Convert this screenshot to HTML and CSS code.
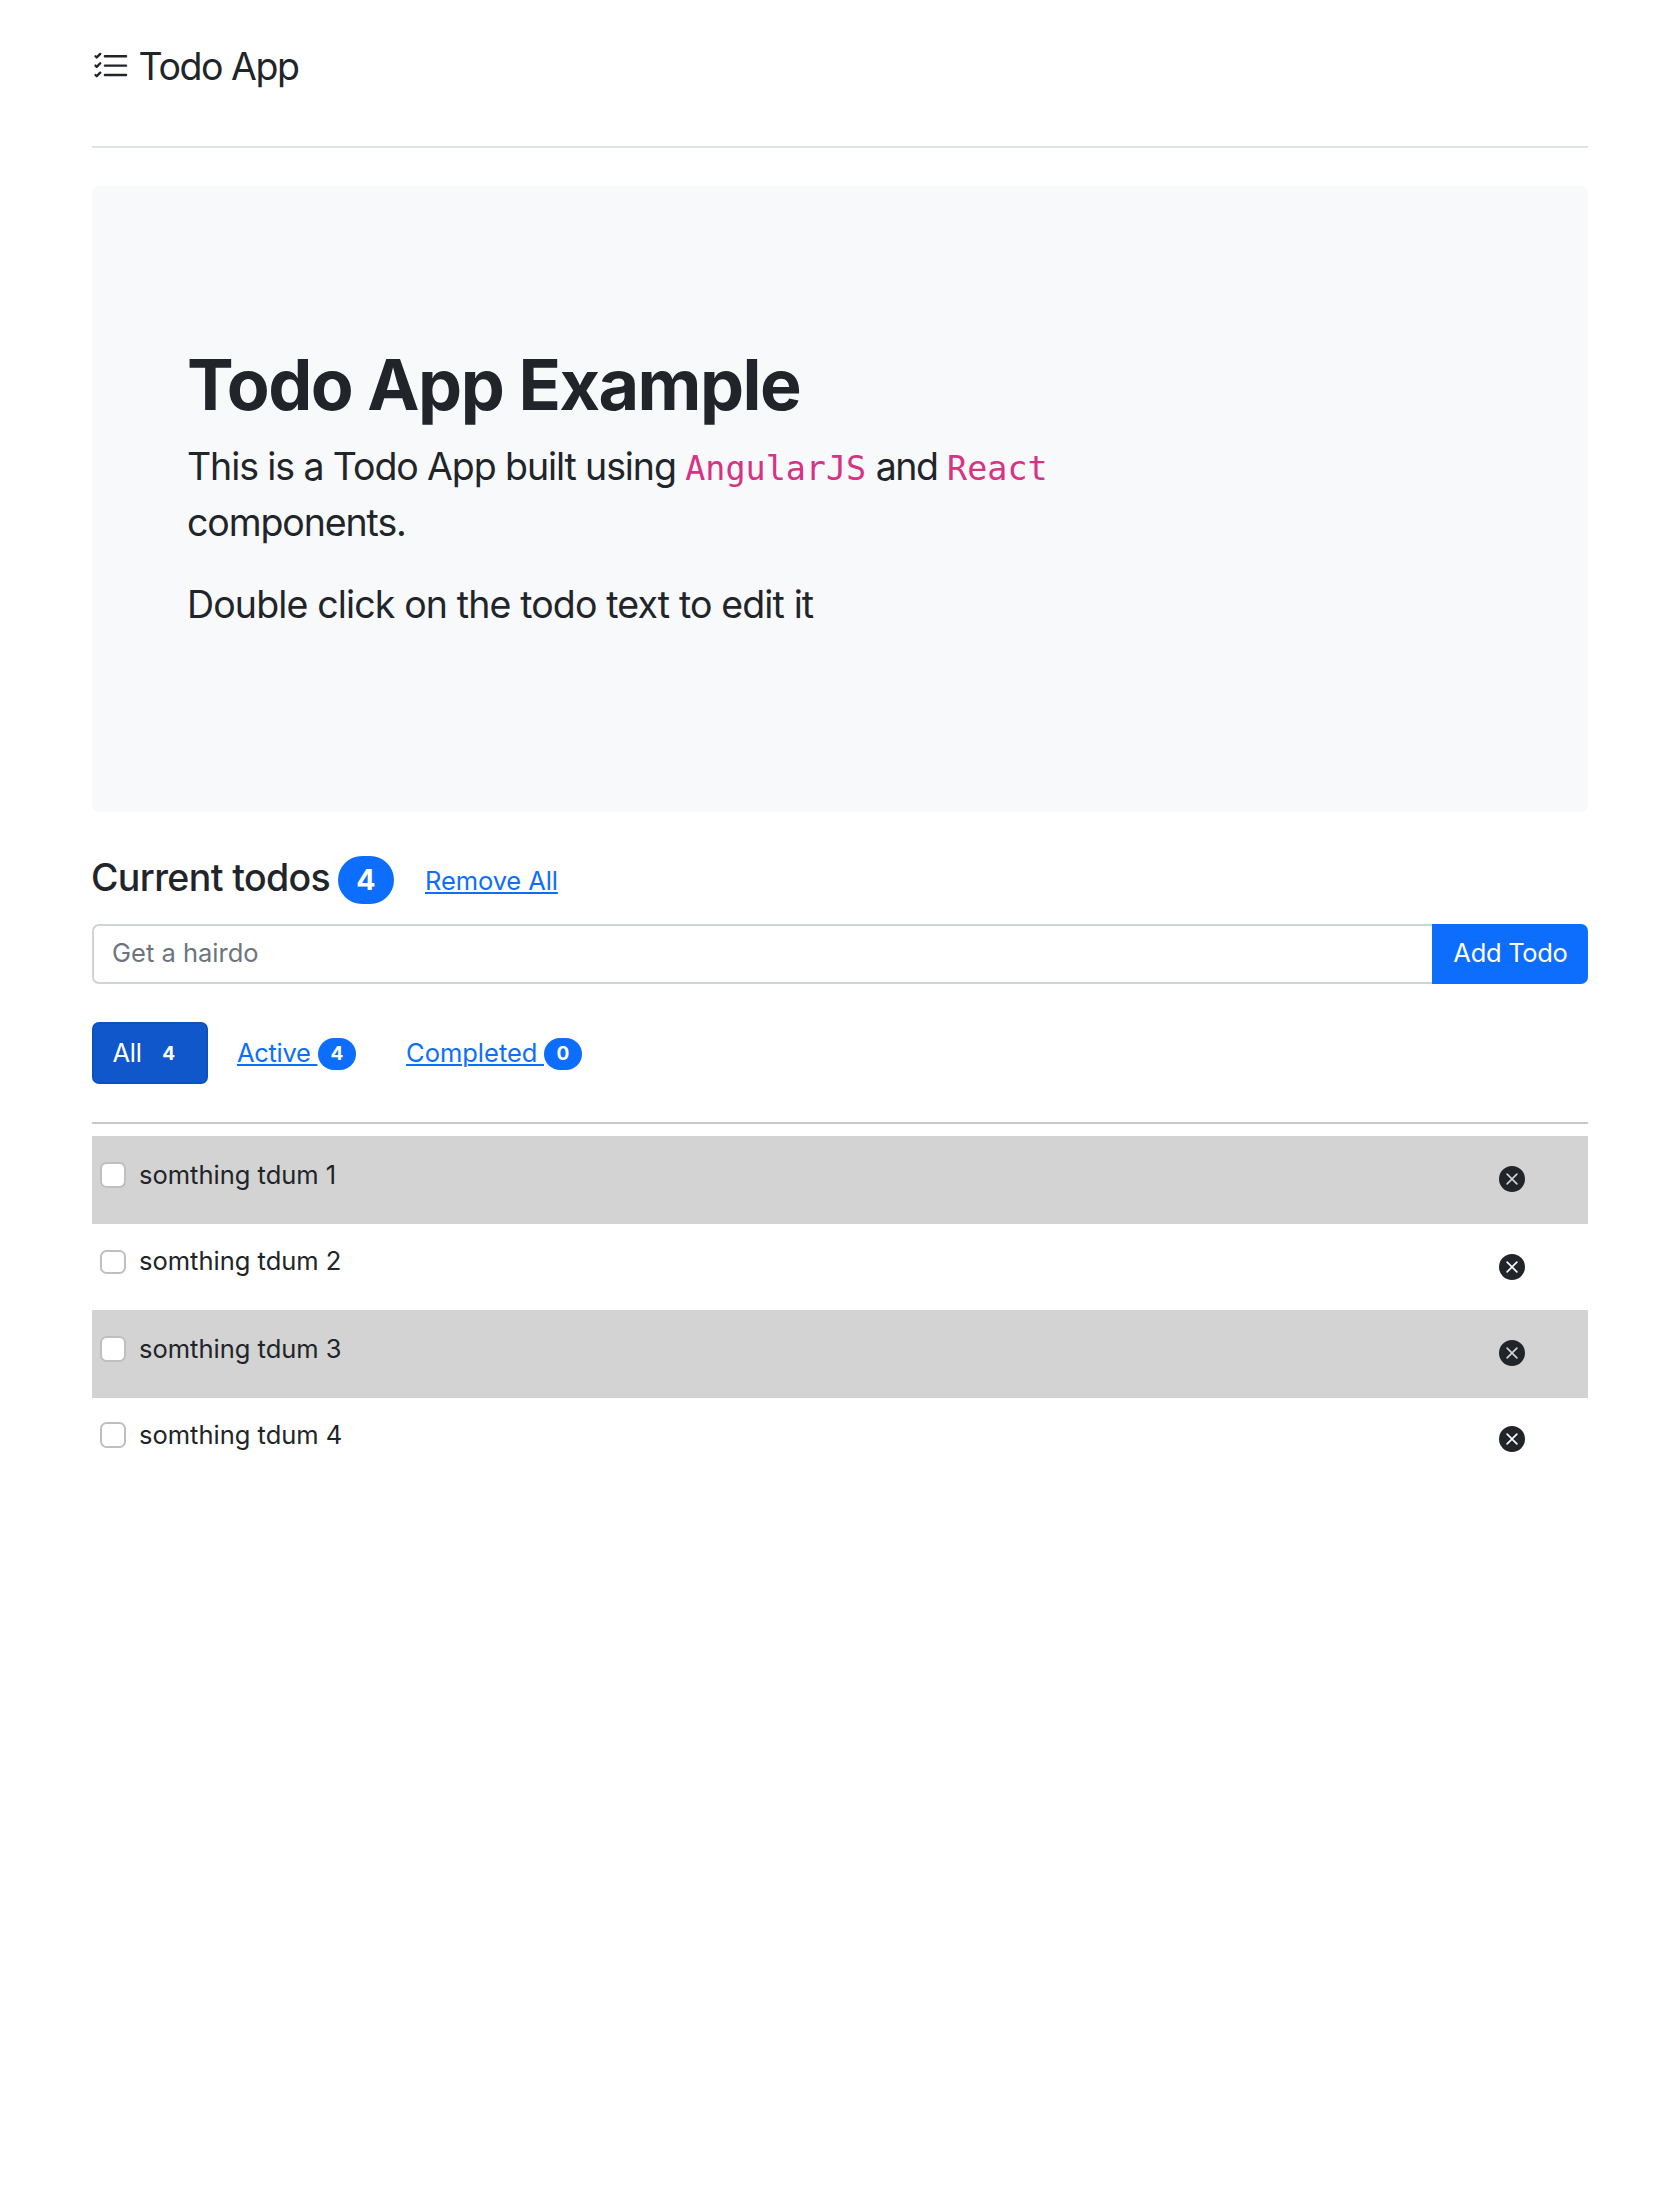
FILE: index.html
```html
<!DOCTYPE html>
<html lang="en">
<head>
<meta charset="utf-8">
<title>Todo App</title>
<link rel="stylesheet" href="styles.css">
</head>
<body>
<svg width="0" height="0" class="sprite" aria-hidden="true">
  <symbol id="list-check" viewBox="0 0 16 16"><path fill-rule="evenodd" d="M5 11.5a.5.5 0 0 1 .5-.5h9a.5.5 0 0 1 0 1h-9a.5.5 0 0 1-.5-.5zm0-4a.5.5 0 0 1 .5-.5h9a.5.5 0 0 1 0 1h-9a.5.5 0 0 1-.5-.5zm0-4a.5.5 0 0 1 .5-.5h9a.5.5 0 0 1 0 1h-9a.5.5 0 0 1-.5-.5zM3.854 2.146a.5.5 0 0 1 0 .708l-1.5 1.5a.5.5 0 0 1-.708 0l-.5-.5a.5.5 0 1 1 .708-.708L2 3.293l1.146-1.147a.5.5 0 0 1 .708 0zm0 4a.5.5 0 0 1 0 .708l-1.5 1.5a.5.5 0 0 1-.708 0l-.5-.5a.5.5 0 1 1 .708-.708L2 7.293l1.146-1.147a.5.5 0 0 1 .708 0zm0 4a.5.5 0 0 1 0 .708l-1.5 1.5a.5.5 0 0 1-.708 0l-.5-.5a.5.5 0 0 1 .708-.708l.146.147 1.146-1.147a.5.5 0 0 1 .708 0z"/></symbol>
  <symbol id="x-circle" viewBox="0 0 16 16"><path d="M16 8A8 8 0 1 1 0 8a8 8 0 0 1 16 0zM5.354 4.646a.5.5 0 1 0-.708.708L7.293 8l-2.647 2.646a.5.5 0 0 0 .708.708L8 8.707l2.646 2.647a.5.5 0 0 0 .708-.708L8.707 8l2.647-2.646a.5.5 0 0 0-.708-.708L8 7.293 5.354 4.646z"/></symbol>
</svg>
<main class="container">
  <header class="header">
    <svg class="logo"><use href="#list-check"/></svg>
    <span class="brand">Todo App</span>
  </header>
  <section class="hero">
    <h1>Todo App Example</h1>
    <p class="lead">This is a Todo App built using <code>AngularJS</code> <span class="and">and</span> <code>React</code> components.</p>
    <p class="hint">Double click on the todo text to edit it</p>
  </section>
  <div class="title">
    <h2>Current todos</h2>
    <span class="badge badge-lg">4</span>
    <a class="link" href="#">Remove All</a>
  </div>
  <form class="add">
    <input class="field" type="text" placeholder="Get a hairdo">
    <button class="submit" type="button">Add Todo</button>
  </form>
  <nav class="filters">
    <a class="filter active" href="#">All <span class="badge">4</span></a>
    <a class="filter f-active" href="#"><span class="link">Active&nbsp;</span><span class="badge">4</span></a>
    <a class="filter f-done" href="#"><span class="link">Completed&nbsp;</span><span class="badge">0</span></a>
  </nav>
  <ul class="list">
    <li class="item"><input type="checkbox" class="check"><span class="text">somthing tdum 1</span><svg class="remove"><use href="#x-circle"/></svg></li>
    <li class="item"><input type="checkbox" class="check"><span class="text">somthing tdum 2</span><svg class="remove"><use href="#x-circle"/></svg></li>
    <li class="item"><input type="checkbox" class="check"><span class="text">somthing tdum 3</span><svg class="remove"><use href="#x-circle"/></svg></li>
    <li class="item"><input type="checkbox" class="check"><span class="text">somthing tdum 4</span><svg class="remove"><use href="#x-circle"/></svg></li>
  </ul>
</main>
</body>
</html>
```
FILE: styles.css
```css
* { box-sizing: border-box; }
body {
  margin: 0;
  background: #fff;
  color: #212529;
  font: 400 25.5px/38px Inter, "Liberation Sans", sans-serif;
}
h1, h2, p { margin: 0; }
.sprite { display: block; }
.container { padding: 0 92px; }

.header {
  display: flex;
  align-items: flex-start;
  height: 148px;
  padding-top: 38px;
  border-bottom: 2px solid #dee2e6;
}
.logo { width: 37.6px; height: 37.6px; margin: 9.8px 0 0 -0.5px; fill: currentColor; }
.brand { margin-left: 9.5px; font-size: 37.5px; line-height: 57px; letter-spacing: -1.45px; }

.hero {
  height: 626px;
  margin-top: 38px;
  padding: 156px 95px 0;
  border-radius: 8px;
  background: #f8f9fb;
}
h1 { font-size: 70px; line-height: 85px; font-weight: 700; letter-spacing: -1.5px; }
.lead, .hint { font-size: 37.5px; line-height: 56px; }
.lead { width: 880px; margin-top: 12px; letter-spacing: -1.1px; }
.hint { margin-top: 26px; letter-spacing: -0.86px; }
.and { letter-spacing: -1.4px; }
code { font: 33.4px/1 "DejaVu Sans Mono", monospace; letter-spacing: 0; color: #d63384; }

.title { display: flex; align-items: flex-start; height: 68px; margin-top: 44px; }
h2 {
  width: 247px;
  margin-left: -1px;
  font-size: 37.5px;
  line-height: 43px;
  font-weight: 500;
  letter-spacing: -0.63px;
  white-space: nowrap;
}
.badge {
  display: inline-block;
  width: 38px;
  height: 32px;
  border-radius: 16px;
  background: #0d6efd;
  color: #fff;
  font-size: 19px;
  line-height: 32px;
  font-weight: 700;
  text-align: center;
}
.badge-lg { width: 56px; height: 48px; border-radius: 24px; font-size: 28.5px; line-height: 48px; }
.link {
  color: #0d6efd;
  text-decoration: underline;
  text-decoration-thickness: 2px;
  text-underline-offset: 2px;
}
.title .link { margin: 6px 0 0 31px; letter-spacing: -0.1px; }

.add { display: flex; height: 60px; }
.field {
  flex: 1;
  min-width: 0;
  padding: 0 19px 2px 18px;
  border: 2px solid #ced4da;
  border-right: 0;
  border-radius: 7px 0 0 7px;
  background: #fff;
  font: inherit;
}
.field::placeholder { color: #6c757d; opacity: 1; }
.submit {
  width: 156px;
  padding: 0 0 2px 1px;
  border: 0;
  border-radius: 0 7px 7px 0;
  background: #0d6efd;
  color: #fff;
  font: inherit;
  letter-spacing: -0.3px;
}

.filters {
  display: flex;
  height: 102px;
  margin-top: 38px;
  border-bottom: 2px solid #c8c9ca;
}
.filter {
  display: flex;
  align-items: center;
  height: 62px;
  color: #0d6efd;
  text-decoration: none;
}
.filter .badge { margin-top: 2px; }
.filter .link { width: 81px; margin-top: -1px; letter-spacing: -0.3px; white-space: nowrap; overflow: hidden; }
.active {
  width: 116px;
  padding: 0 0 1px 18.5px;
  border: 2px solid #0a53be;
  border-radius: 7px;
  background: #0f57ca;
  color: #fff;
  letter-spacing: -0.3px;
}
.active .badge { margin-left: 8px; background: none; }
.f-active { margin-left: 29px; }
.f-done { margin-left: 50px; }
.f-done .link { width: 138px; letter-spacing: 0; }

.list { margin: 12px 0 0; padding: 0; list-style: none; }
.item { display: flex; align-items: flex-start; height: 88px; padding-left: 8px; }
.item:nth-child(odd) { background: #d3d3d3; }
.item:nth-child(even) { height: 86px; }
.check {
  appearance: none;
  width: 26px;
  height: 26px;
  margin: 26px 0 0;
  border: 2px solid #bfbfbf;
  border-radius: 6.5px;
  background: #fff;
}
.item:nth-child(2) .check { height: 24px; }
.item:nth-child(4) .check { margin-top: 24px; }
.text { flex: 1; margin: 20px 0 0 13px; }
.item:nth-child(even) .text { margin-top: 18px; }
.remove { width: 26px; height: 26px; margin: 30px 63px 0 0; fill: #212529; }
.item:nth-child(4) .remove { margin-top: 28px; }
```
